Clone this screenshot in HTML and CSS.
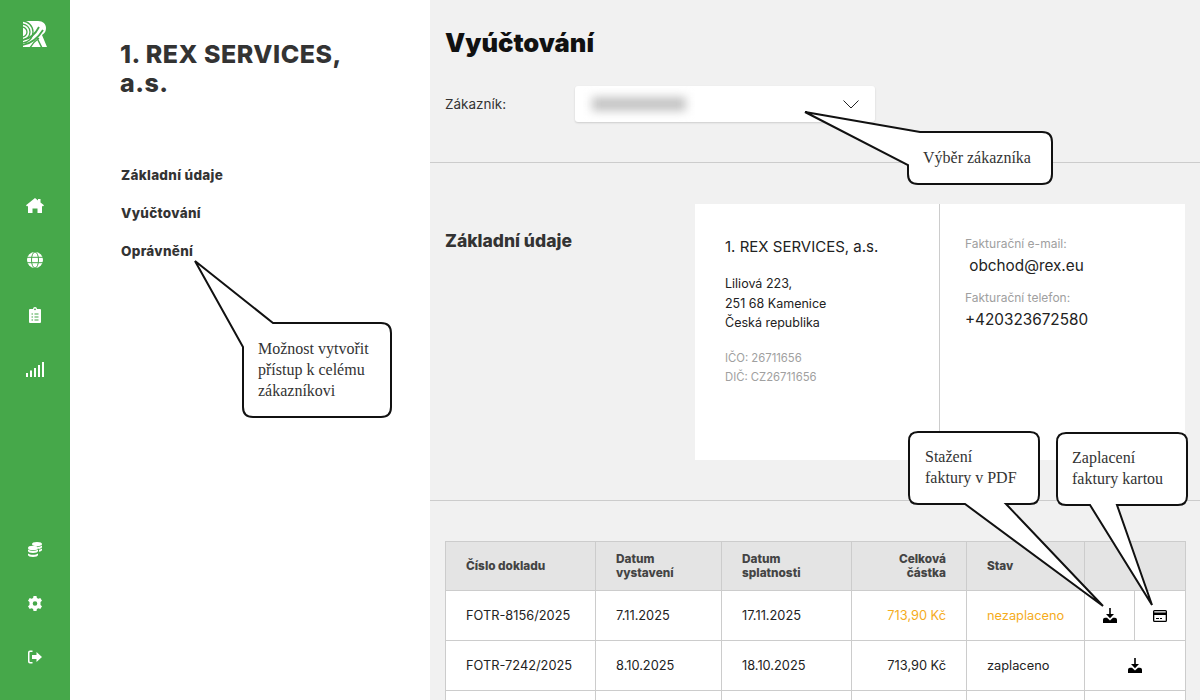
FILE: index.html
```html
<!DOCTYPE html>
<html lang="cs">
<head>
    <meta charset="UTF-8">
    <meta name="viewport" content="width=device-width, initial-scale=1.0">
    <title>Vyúčtování</title>
    <link rel="stylesheet" href="styles.css">
</head>
<body>
    <nav class="sidebar">
        <svg class="logo" viewBox="0 0 24 26" width="24" height="26">
            <path fill="#fff" d="M0 0h15c5 0 8 3 8 7 0 3-1 5-4 7l5 12H0z"/>
            <g fill="none" stroke="#46a84a" stroke-width="1.300">
                <circle cx="-1" cy="11" r="5"/>
                <circle cx="-1" cy="11" r="8"/>
                <circle cx="-1" cy="11" r="11"/>
                <path d="M-1 19c7-1 13-5 17-13" stroke-width="1.800"/>
                <path d="M-1 24c8-1 16-7 21-15" stroke-width="1.800"/>
                <path d="M7 27c2-4 5-7 9-10" stroke-width="1.500"/>
                <path d="M14 17l5 10" stroke-width="1.500"/>
            </g>
        </svg>
        <div class="nav-top">
            <svg viewBox="0 0 18 15" width="18" height="15"><path fill="#fff" d="M9 0l3 2.500V1h2.500v3.600L18 7.300l-1.100 1.200-.9-.7V15h-4.500v-4.500h-5V15H2V7.800l-.9.7L0 7.300z"/></svg>
            <svg viewBox="0 0 16 16" width="16" height="16"><circle cx="8" cy="8" r="8" fill="#fff"/><g fill="none" stroke="#46a84a"><ellipse cx="8" cy="8" rx="3.500" ry="8"/><path d="M0 5.300h16M0 10.700h16"/></g></svg>
            <svg viewBox="0 0 12 16" width="12" height="16"><path fill="#fff" d="M1 2h3a2 2 0 0 1 4 0h3a1 1 0 0 1 1 1v12a1 1 0 0 1-1 1H1a1 1 0 0 1-1-1V3a1 1 0 0 1 1-1z"/><path stroke="#46a84a" stroke-width="1.200" d="M2.500 7h1.500M5.500 7h4M2.500 10h1.500M5.500 10h4M2.500 13h1.500M5.500 13h4"/><circle cx="6" cy="2.300" r=".9" fill="#46a84a"/></svg>
            <svg viewBox="0 0 18 15" width="18" height="15"><path fill="#fff" d="M0 11h2v4H0zM4 8.500h2V15H4zM8 6h2v9H8zM12 3h2v12h-2zM16 0h2v15h-2z"/></svg>
        </div>
        <div class="nav-bottom">
            <svg viewBox="0 0 14 15" width="14" height="15"><g fill="#fff"><ellipse cx="9" cy="2" rx="5" ry="2"/><path d="M9.500 4.700c2 0 3.500-.5 4.500-1.300V5c0 .9-1.500 1.700-3.500 1.900zM11 7.800c1.300-.2 2.300-.6 3-1.200V8c0 .7-1.200 1.500-3 1.800z"/><ellipse cx="5" cy="6" rx="5" ry="2.200"/><path d="M0 7.600c1 .9 3 1.400 5 1.400s4-.5 5-1.400V9c0 1-2.200 2-5 2s-5-1-5-2zM0 11.400c1 .9 3 1.400 5 1.400s4-.5 5-1.400V13c0 1-2.200 2-5 2s-5-1-5-2z"/></g></svg>
            <svg viewBox="0 0 14 15" width="14" height="15"><path fill="#fff" fill-rule="evenodd" d="M5.500 0h3l.4 2 1.500.8 1.900-.7L14 4.700l-1.500 1.300v3L14 10.300l-1.700 2.600-1.900-.7-1.500.8-.4 2h-3l-.4-2-1.500-.8-1.900.7L0 10.300 1.500 9V6L0 4.700l1.700-2.600 1.900.7 1.500-.8zM7 5.200a2.300 2.300 0 1 0 0 4.600 2.300 2.300 0 0 0 0-4.600z"/></svg>
            <svg viewBox="0 0 14 14" width="14" height="14"><path fill="#fff" d="M14 7L8.500 2v3H4v4h4.500v3zM0 2.500A2 2 0 0 1 2 .5h2.500V2H2.300a.8.800 0 0 0-.8.800v8.400c0 .4.400.8.800.8h2.200v1.500H2a2 2 0 0 1-2-2z"/></svg>
        </div>
    </nav>

    <aside class="submenu">
        <h2>1. REX SERVICES, a.s.</h2>
        <ul>
            <li>Základní údaje</li>
            <li>Vyúčtování</li>
            <li>Oprávnění</li>
        </ul>
    </aside>

    <main class="content">
        <section class="top">
            <h1>Vyúčtování</h1>
            <div class="customer">
                <label>Zákazník:</label>
                <div class="select">
                    <span class="blurred"></span>
                    <svg viewBox="0 0 16 9" width="16" height="9"><path fill="none" stroke="#222" d="M.5.5L8 8l7.500-7.500"/></svg>
                </div>
            </div>
        </section>

        <section class="basic">
            <h3>Základní údaje</h3>
            <div class="card">
                <div class="card-left">
                    <p class="company">1. REX SERVICES, a.s.</p>
                    <p class="address">Liliová 223,<br>251 68 Kamenice<br>Česká republika</p>
                    <p class="ids">IČO: 26711656<br>DIČ: CZ26711656</p>
                </div>
                <div class="card-right">
                    <p class="field-label">Fakturační e-mail:</p>
                    <p class="field-value">&nbsp;obchod@rex.eu</p>
                    <p class="field-label">Fakturační telefon:</p>
                    <p class="field-value">+420323672580</p>
                </div>
            </div>
        </section>

        <section class="invoices">
            <table>
                <colgroup>
                    <col class="c1"><col class="c2"><col class="c3"><col class="c4"><col class="c5"><col class="c6"><col class="c7">
                </colgroup>
                <thead>
                    <tr>
                        <th>Číslo dokladu</th>
                        <th>Datum<br>vystavení</th>
                        <th>Datum<br>splatnosti</th>
                        <th class="num">Celková<br>částka</th>
                        <th>Stav</th>
                        <th colspan="2"></th>
                    </tr>
                </thead>
                <tbody>
                    <tr>
                        <td>FOTR-8156/2025</td>
                        <td>7.11.2025</td>
                        <td>17.11.2025</td>
                        <td class="num unpaid">713,90 Kč</td>
                        <td class="unpaid">nezaplaceno</td>
                        <td class="icon"><svg viewBox="0 0 14 15" width="14" height="15"><path d="M6.200 0h1.600v6h3.200L7 10.300 3 6h3.200zM0 12c0-1.500 1-2.200 2-2.200h2L7 12.500l3-2.700h2c1 0 2 .7 2 2.200v3H0z"/></svg></td>
                        <td class="icon"><svg viewBox="0 0 14 12" width="14" height="12"><path fill-rule="evenodd" d="M1.500 0h11A1.500 1.500 0 0 1 14 1.500v9a1.500 1.500 0 0 1-1.500 1.500h-11A1.500 1.500 0 0 1 0 10.500v-9A1.500 1.500 0 0 1 1.500 0zM1.300 1.300v1.200h11.400V1.300zM1.300 5v5.700h11.400V5zM3 8h3v1H3zM7 8h2v1H7z"/></svg></td>
                    </tr>
                    <tr>
                        <td>FOTR-7242/2025</td>
                        <td>8.10.2025</td>
                        <td>18.10.2025</td>
                        <td class="num">713,90 Kč</td>
                        <td>zaplaceno</td>
                        <td class="icon" colspan="2"><svg viewBox="0 0 14 15" width="14" height="15"><path d="M6.200 0h1.600v6h3.200L7 10.300 3 6h3.200zM0 12c0-1.500 1-2.200 2-2.200h2L7 12.500l3-2.700h2c1 0 2 .7 2 2.200v3H0z"/></svg></td>
                    </tr>
                    <tr>
                        <td></td><td></td><td></td><td></td><td></td><td colspan="2"></td>
                    </tr>
                </tbody>
            </table>
        </section>
    </main>

    <!-- popisky pres screenshot -->
    <div class="callout callout-access">
        <svg viewBox="0 0 200 165" width="200" height="165"><path d="M1 2L79 64H187Q197 64 197 74V148Q197 158 187 158H59Q49 158 49 148V88Z"/></svg>
        <p>Možnost vytvořit<br>přístup k celému<br>zákazníkovi</p>
    </div>
    <div class="callout callout-customer">
        <svg viewBox="0 0 255 80" width="255" height="80"><path d="M1 3L116 23H238Q248 23 248 33V65Q248 75 238 75H114Q104 75 104 65V56Z"/></svg>
        <p>Výběr zákazníka</p>
    </div>
    <div class="callout callout-pdf">
        <svg viewBox="0 0 210 180" width="210" height="180"><path d="M9 1H121Q130 1 130 10V64Q130 73 121 73H97L194 175 56 73H9Q0 73 0 64V10Q0 1 9 1Z"/></svg>
        <p>Stažení<br>faktury v PDF</p>
    </div>
    <div class="callout callout-card">
        <svg viewBox="0 0 135 180" width="135" height="180"><path d="M9 1H121Q130 1 130 10V64Q130 73 121 73H60L95 173 33 73H9Q0 73 0 64V10Q0 1 9 1Z"/></svg>
        <p>Zaplacení<br>faktury kartou</p>
    </div>
</body>
</html>
```
FILE: styles.css
```css
* {
    box-sizing: border-box;
}
html, body {
    height: 700px;
    overflow: hidden;
}
body {
    margin: 0;
    display: flex;
    font-family: Inter, "Liberation Sans", sans-serif;
    color: #222;
    background: #f1f1f1;
    position: relative;
}
p, h1, h2, h3, ul {
    margin: 0;
    padding: 0;
}

/* levy zeleny pruh */
.sidebar {
    width: 70px;
    flex-shrink: 0;
    height: 700px;
    background: #46a84a;
    display: flex;
    flex-direction: column;
    align-items: center;
    padding-top: 21px;
}
.logo {
    display: block;
}
.nav-top {
    margin-top: 151px;
    display: flex;
    flex-direction: column;
    align-items: center;
    gap: 39px;
}
.nav-bottom {
    margin-top: 165px;
    display: flex;
    flex-direction: column;
    align-items: center;
    gap: 39px;
}

.submenu {
    width: 360px;
    flex-shrink: 0;
    background: #fff;
    padding: 40px 50px;
}
.submenu h2 {
    font-size: 25px;
    line-height: 29px;
    font-weight: 800;
    color: #333;
    width: 250px;
    letter-spacing: .5px;
}
.submenu ul {
    list-style: none;
    margin-top: 67px;
    padding-left: 1px;
}
.submenu li {
    font-size: 13.500px;
    line-height: 20px;
    font-weight: 800;
    color: #333;
    letter-spacing: .3px;
    margin-bottom: 18px;
}

.content {
    flex: 1;
    min-width: 0;
}
.top {
    height: 163px;
    padding: 27px 15px 0;
    border-bottom: 1px solid #ccc;
}
.top h1 {
    font-size: 25.500px;
    line-height: 32px;
    font-weight: 900;
    color: #111;
}
.customer {
    display: flex;
    align-items: center;
    margin-top: 27px;
}
.customer label {
    width: 130px;
    font-size: 13.500px;
    color: #333;
}
.select {
    width: 300px;
    height: 36px;
    background: #fff;
    border-radius: 3px;
    box-shadow: 0 1px 2px rgba(0, 0, 0, 0.15);
    display: flex;
    align-items: center;
    justify-content: space-between;
    padding: 0 16px 0 17px;
}
.blurred {
    width: 94px;
    height: 14px;
    background: #c4c4c4;
    filter: blur(5px);
}

.basic {
    height: 338px;
    padding: 41px 15px 0;
    display: flex;
    border-bottom: 1px solid #ccc;
}
.basic h3 {
    width: 250px;
    font-size: 17.500px;
    line-height: 76px;
    height: 76px;
    font-weight: 800;
    color: #333;
    margin-top: 0;
    margin-top: -1px;
}
.card {
    width: 490px;
    height: 256px;
    background: #fff;
    display: flex;
}
.card-left {
    width: 245px;
    border-right: 1px solid #ccc;
    padding: 33px 30px 0;
}
.card-right {
    flex: 1;
    padding: 32px 25px 0;
}
.company {
    font-size: 15px;
    line-height: 20px;
    margin-bottom: 17px;
}
.address {
    font-size: 12.500px;
    line-height: 19.500px;
    margin-bottom: 16px;
}
.ids {
    font-size: 11.300px;
    line-height: 19.500px;
    color: #a0a0a0;
}
.field-label {
    font-size: 12px;
    line-height: 16px;
    color: #a0a0a0;
}
.field-value {
    font-size: 15.300px;
    line-height: 22px;
    margin: 3px 0 13px;
}

.invoices {
    padding: 40px 15px 0;
}
table {
    width: 740px;
    table-layout: fixed;
    border-collapse: collapse;
    background: #fff;
    font-size: 12.800px;
}
.c1 { width: 150px; }
.c2 { width: 126px; }
.c3 { width: 130px; }
.c4 { width: 115px; }
.c5 { width: 118px; }
.c6 { width: 50px; }
.c7 { width: 51px; }
th, td {
    border: 1px solid #ccc;
    padding: 0 20px;
    text-align: left;
}
th {
    height: 49px;
    background: #e4e4e4;
    font-size: 11.800px;
    line-height: 14px;
    font-weight: 800;
    color: #444;
}
td {
    height: 50px;
}
th.num, td.num {
    text-align: right;
}
.unpaid {
    color: #f5ac1c;
}
td.icon {
    padding: 0;
    text-align: center;
}
td.icon svg {
    display: block;
    margin: 0 auto;
}

/* bubliny */
.callout {
    position: absolute;
}
.callout svg {
    display: block;
    overflow: visible;
}
.callout path {
    fill: #fff;
    stroke: #111;
    stroke-width: 2;
}
.callout p {
    position: absolute;
    font-family: "Liberation Serif", serif;
    font-size: 16px;
    line-height: 21px;
    color: #333;
    white-space: nowrap;
}
.callout-access {
    left: 194px;
    top: 259px;
}
.callout-access p {
    left: 64px;
    top: 79px;
}
.callout-customer {
    left: 804px;
    top: 109px;
}
.callout-customer p {
    left: 119px;
    top: 38px;
}
.callout-pdf {
    left: 909px;
    top: 431px;
}
.callout-pdf p {
    left: 16px;
    top: 15px;
}
.callout-card {
    left: 1057px;
    top: 432px;
}
.callout-card p {
    left: 15px;
    top: 15px;
}
```
